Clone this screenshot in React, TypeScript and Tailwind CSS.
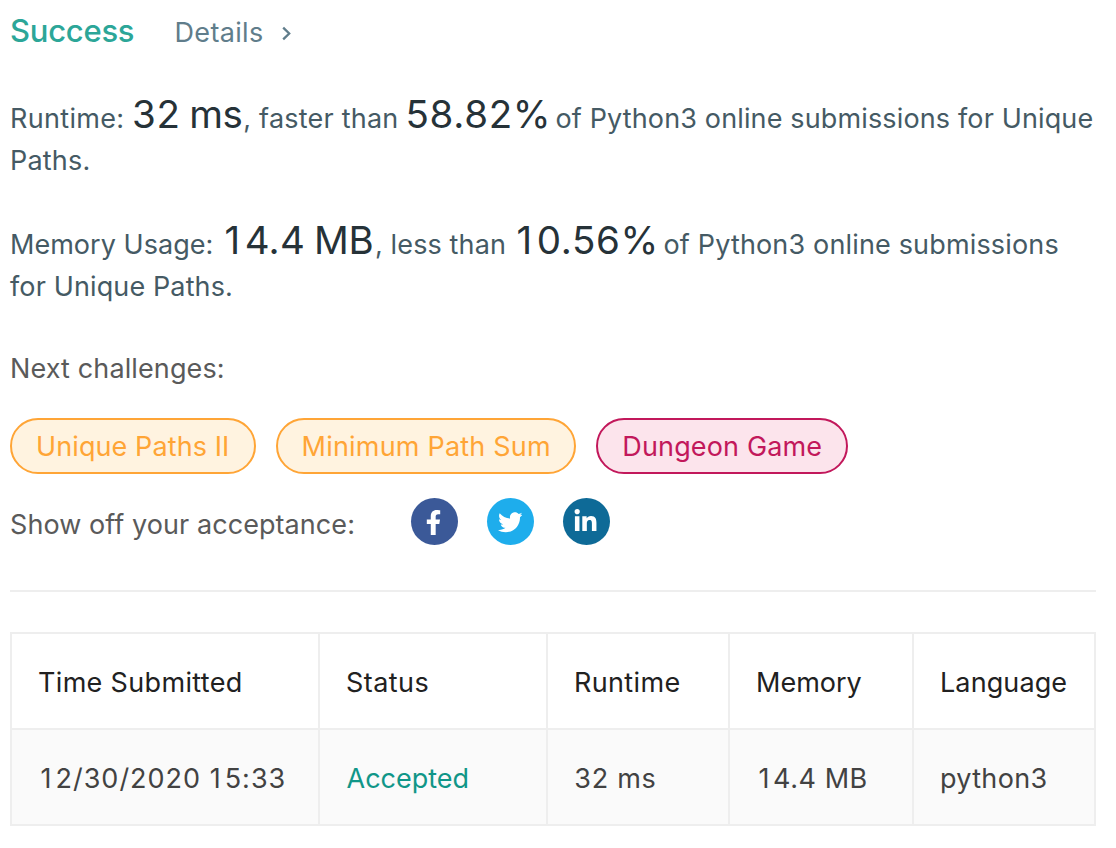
import type { ReactNode } from 'react';
import { FaFacebookF, FaLinkedinIn, FaTwitter } from 'react-icons/fa';

function Pill({ className, children }: { className: string; children: ReactNode }) {
  return (
    <a className={`flex h-14 items-center rounded-full border-2 pt-0.5 ${className}`}>{children}</a>
  );
}

function ShareButton({ className, children }: { className: string; children: ReactNode }) {
  return (
    <a className={`flex size-[47px] items-center justify-center rounded-full text-white ${className}`}>
      {children}
    </a>
  );
}

export default function App() {
  return (
    <main className="h-[848px] w-[1116px] overflow-hidden bg-white pt-2.5 pr-5 pl-2.5 font-['Inter',sans-serif] text-[27px] leading-[42px] whitespace-nowrap text-[#455a64]">
      <header className="flex h-[42px] items-baseline">
        <h1 className="w-[164.5px] text-[31px] leading-[42px] font-medium tracking-[-0.25px] text-[#2ca698]">
          Success
        </h1>
        <a className="flex items-baseline text-[#607d8b]">
          <span className="w-[107px] tracking-[0.34px]">Details</span>
          <svg width="10" height="16" viewBox="0 0 10 16" fill="none" stroke="currentColor" strokeWidth="2.3">
            <path d="M1.2 1.6 7.2 7.5 1.2 13.4" />
          </svg>
        </a>
      </header>

      <section className="mt-[41px]">
        <p className="flex h-[47px] items-baseline">
          <span className="w-[122px] tracking-[0.33px]">Runtime:</span>
          <span className="w-[111.3px] text-[38.5px] tracking-[-0.4px] text-[#263238] [word-spacing:-1.6px]">
            <span className="tracking-[0.6px]">32</span> ms
          </span>
          <span className="w-[162.2px] tracking-[0.22px]">, faster than</span>
          <span className="w-[150px] text-[38.5px] tracking-[0.7px] text-[#263238]">58.82%</span>
          <span className="tracking-[0.14px]">of Python3 online submissions for Unique</span>
        </p>
        <p className="tracking-[0.21px]">Paths.</p>
      </section>

      <section className="mt-[37px]">
        <p className="flex h-[47px] items-baseline">
          <span className="w-[214.5px] tracking-[0.03px]">Memory Usage:</span>
          <span className="w-[150.5px] text-[38.5px] tracking-[-0.2px] text-[#263238] [word-spacing:-2px]">
            <span className="tracking-[4.5px]">1</span>
            <span className="tracking-[0.35px]">4.4</span> MB
          </span>
          <span className="w-[141.5px] tracking-[0.12px]">, less than</span>
          <span className="w-[147px] text-[38.5px] tracking-[0.66px] text-[#263238]">
            <span className="tracking-[4.6px]">1</span>0.56%
          </span>
          <span className="tracking-[0.16px]">of Python3 online submissions</span>
        </p>
        <p className="tracking-[0.13px]">for Unique Paths.</p>
      </section>

      <p className="mt-10 tracking-[0.12px] text-[#5a5a5a]">Next challenges:</p>

      <nav className="mt-7 flex gap-5">
        <Pill className="w-[246px] border-[#ffa536] bg-[#fff3e0] pl-[24px] tracking-[0.1px] text-[#ffa536]">
          Unique Paths II
        </Pill>
        <Pill className="w-[300px] border-[#ffa536] bg-[#fff3e0] pl-[23.6px] tracking-[0.2px] text-[#ffa536]">
          Minimum Path Sum
        </Pill>
        <Pill className="w-[252px] border-[#c2185b] bg-[#fce4ec] pl-[24.3px] tracking-[0.15px] text-[#c2185b]">
          Dungeon Game
        </Pill>
      </nav>

      <div className="mt-6 flex h-[47px]">
        <span className="w-[400.5px] pt-1.5 tracking-[0.07px] text-[#5a5a5a]">Show off your acceptance:</span>
        <div className="flex gap-[29px]">
          <ShareButton className="bg-[#3b5998] pt-px pr-px">
            <FaFacebookF size={25} />
          </ShareButton>
          <ShareButton className="bg-[#1eadec] pt-0.5">
            <FaTwitter size={24.5} />
          </ShareButton>
          <ShareButton className="bg-[#0e6a97] pr-px pb-px">
            <FaLinkedinIn size={25} />
          </ShareButton>
        </div>
      </div>

      <hr className="mt-[45px] w-[1086px] border-t-2 border-[#eeeeee]" />

      <div className="mt-10 w-[1086px] border-2 border-[#eeeeee]">
        <div className="grid h-[94px] grid-cols-[306px_226px_180px_182px_180px] gap-x-0.5 bg-[#eeeeee] text-[#212121] [&>div]:bg-white [&>div]:pt-7">
          <div className="pl-[26px] tracking-[0.33px]">Time Submitted</div>
          <div className="pl-[26px] tracking-[0.45px]">Status</div>
          <div className="pl-[26px] tracking-[0.35px]">Runtime</div>
          <div className="pl-[26px]">Memory</div>
          <div className="pl-[26px] tracking-[0.1px]">Language</div>
        </div>
        <div className="grid h-24 grid-cols-[306px_226px_180px_182px_180px] gap-x-0.5 border-t-2 border-[#eeeeee] bg-[#eeeeee] text-[#424242] [&>div]:bg-[#fafafa] [&>div]:pt-7">
          <div className="pl-[28.5px] tracking-[1px]">
            <span className="tracking-[4px]">1</span>2/30/2020 <span className="tracking-[4px]">1</span>5:33
          </div>
          <div className="pl-[26.5px] text-[#109688]">Accepted</div>
          <div className="pl-[26.3px] tracking-[0.7px]">32 ms</div>
          <div className="pl-[28.5px] tracking-[0.55px]">
            <span className="tracking-[3.6px]">1</span>4.4 MB
          </div>
          <div className="pl-[26px] tracking-[0.32px]">python3</div>
        </div>
      </div>
    </main>
  );
}
